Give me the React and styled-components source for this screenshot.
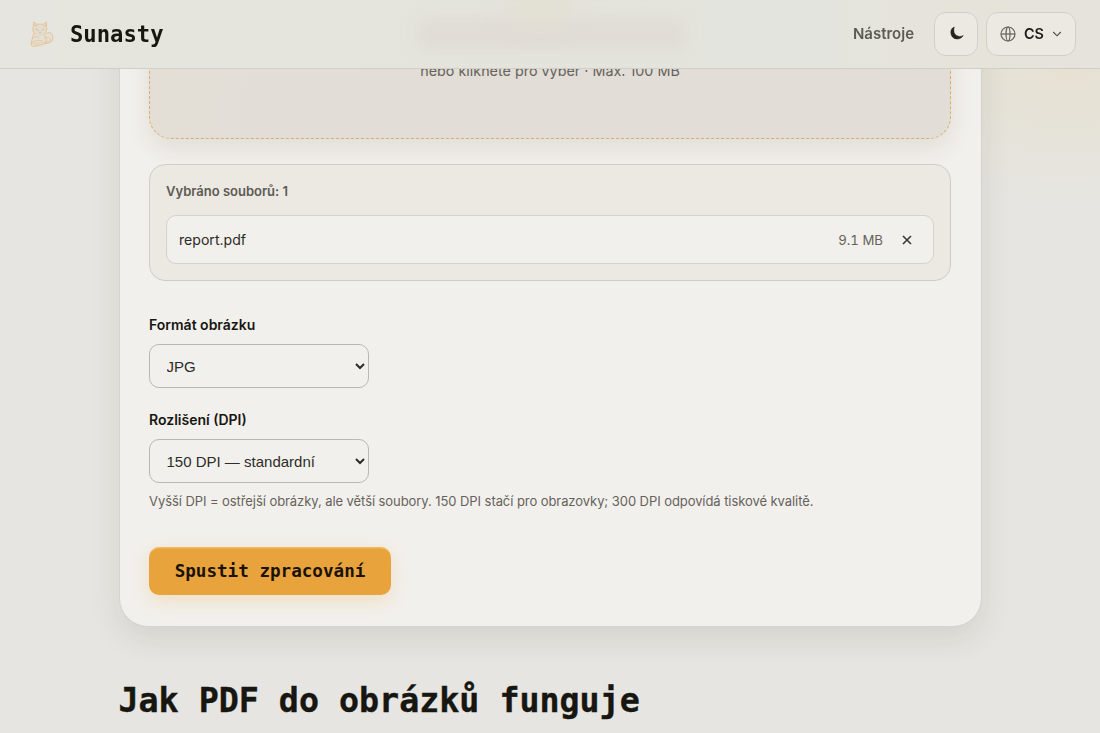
import React from "react";

import styled, { createGlobalStyle } from "styled-components";

const sans = `Inter, "Liberation Sans", sans-serif`;
const mono = `"DejaVu Sans Mono", "Liberation Mono", monospace`;

const GlobalStyle = createGlobalStyle`
  * {
    box-sizing: border-box;
  }

  body {
    margin: 0;
    height: 733px;
    overflow: hidden;
    font-family: ${sans};
    color: #171611;
    background:
      radial-gradient(ellipse 230px 150px at 1070px 60px, rgba(230, 223, 204, 0.75), rgba(230, 223, 204, 0) 100%),
      #e6e5e1;
  }
`;

const Header = styled.header`
  position: fixed;
  z-index: 10;
  top: 0;
  left: 0;
  right: 0;
  display: flex;
  align-items: center;
  height: 69px;
  padding: 0 24px 1px 26px;
  border-bottom: 1px solid #cfcec8;
  background: linear-gradient(90deg, #e6e5e0 0%, #e5e5dd 12%, #e4e4de 75%, #e6e3da 88%, #e5e3dc 100%);

  &::before {
    content: "";
    position: absolute;
    z-index: -1;
    top: 18px;
    left: 418px;
    width: 268px;
    height: 32px;
    background: #e0dcd5;
    filter: blur(8px);
  }

  &::after {
    content: "";
    position: absolute;
    z-index: -1;
    top: -8px;
    left: 505px;
    width: 66px;
    height: 30px;
    background: #e3dfd2;
    filter: blur(11px);
  }
`;

const Brand = styled.a`
  display: flex;
  align-items: center;
  gap: 13px;
  margin-right: auto;
  font-family: ${mono};
  font-size: 22.2px;
  font-weight: 700;
  line-height: 30px;
`;

const NavLink = styled.a`
  margin-right: 20px;
  font-size: 15px;
  font-weight: 600;
  color: #5c5b54;
`;

const HeaderButton = styled.button`
  display: flex;
  align-items: center;
  justify-content: center;
  gap: 8px;
  width: ${({ $width }) => `${$width}px`};
  height: 44px;
  margin-left: ${({ $gap = 0 }) => `${$gap}px`};
  padding: 0;
  border: 1px solid #d1cfca;
  border-radius: 12px;
  font-family: ${sans};
  font-size: 14.4px;
  font-weight: 600;
  color: #1c1b17;
  background: #ece9e3;
`;

const Main = styled.main`
  width: 863px;
  margin: 0 auto;
`;

const Card = styled.section`
  height: 667px;
  margin-top: -40px;
  padding: 30px 29.5px;
  border: 1px solid #d5d3cd;
  border-radius: 29px;
  background: #f2f0ec;
  box-shadow: 0 12px 30px rgba(50, 45, 30, 0.1);
`;

const DropZone = styled.div`
  display: flex;
  align-items: flex-end;
  justify-content: center;
  height: 148px;
  padding-bottom: 57px;
  border: 1.5px dashed #dcae62;
  border-radius: 22px;
  font-size: 14.35px;
  line-height: 20px;
  color: #65625b;
  background: linear-gradient(100deg, #e3dfd5 0%, #e2ddd6 15%, #e2ddd6 100%);
  box-shadow: 0 10px 24px rgba(50, 45, 30, 0.09);
`;

const FilePanel = styled.div`
  height: 117px;
  margin-top: 25px;
  padding: 16px;
  border: 1px solid #cecdc9;
  border-radius: 16px;
  background: #ece9e2;
`;

const PanelTitle = styled.p`
  margin: 0 0 13px;
  font-size: 13px;
  font-weight: 600;
  line-height: 21px;
  color: #5c5a53;
`;

const FileRow = styled.div`
  display: flex;
  align-items: center;
  height: 49px;
  padding: 0 12px;
  border: 1px solid #d3d2cd;
  border-radius: 10px;
  font-size: 14.1px;
  color: #2b2a26;
  background: #f2f0ec;
`;

const FileSize = styled.span`
  margin-left: auto;
  font-size: 13.2px;
  font-variant-numeric: tabular-nums;
  color: #65625b;
`;

const RemoveButton = styled.button`
  display: flex;
  align-items: center;
  justify-content: center;
  width: 28px;
  height: 28px;
  margin-left: 10px;
  padding: 0;
  border: 0;
  color: #3c3a35;
  background: transparent;
`;

const Field = styled.div`
  display: flex;
  flex-direction: column;
  align-items: flex-start;
  margin-top: ${({ $top }) => `${$top}px`};
`;

const Label = styled.label`
  margin-bottom: 8px;
  font-size: 14px;
  font-weight: 600;
  line-height: 22px;
`;

const Select = styled.select`
  width: 220px;
  height: 44px;
  padding: 0 0 0 12.5px;
  border: 1px solid #b9b8b3;
  border-radius: 10px;
  font-family: "Liberation Sans", sans-serif;
  font-size: 15px;
  color: #2d2c28;
  background: #f2f0ec;
`;

const Hint = styled.p`
  margin: 7px 0 0;
  font-size: 13px;
  line-height: 22px;
  letter-spacing: -0.07px;
  white-space: nowrap;
  color: #65625b;
`;

const SubmitButton = styled.button`
  width: 242px;
  height: 48px;
  margin-top: 35px;
  padding: 0;
  border: 0;
  border-radius: 10px;
  font-family: ${mono};
  font-size: 17.6px;
  font-weight: 700;
  color: #1a1206;
  background: #e8a33d;
  box-shadow: 0 6px 18px rgba(232, 163, 61, 0.22), inset 0 1.5px 0 rgba(255, 220, 155, 0.4);
`;

const Heading = styled.h2`
  margin: 52px 0 0;
  font-family: ${mono};
  font-size: 33.3px;
  font-weight: 700;
  line-height: 44px;
  white-space: nowrap;
  -webkit-text-stroke: 0.4px #171611;
`;

const CatLogo = () => (
  <svg width="31" height="32" viewBox="0 0 31 32" fill="none" stroke="#e6c495" strokeWidth="1" strokeLinejoin="round" strokeLinecap="round">
    <path d="M7.5 14C6.4 11.5 6.7 9 7.6 7.5L7.5 4L11 6.5C13 6 15.5 6 17 6.5L20.5 4L20.3 8.5C21.2 11 20.5 14 18 16C15.5 17.6 11.5 17.3 9.5 16Z" fill="#e4ddd0" />
    <path d="M8 15.5C6.5 19 5.5 23 5.2 26C5 28.5 7 29 9 28C13 27.8 18 26 22 25C26 24.5 27.5 21.5 26.6 17.5C25.7 14 22 14 20 15.5M18 17C20 19 21 21.5 20 23.5" fill="#e4ddd0" fillOpacity="0.7" />
    <path d="M7 20C9 18 12 18.5 13 20M6 25C9 22.5 12 22 16 22.5M18 20C22 18.5 25 20 24.5 22.5C22 25.5 17 23.5 12 25.5C9 27 7 26 8 24" strokeWidth="0.8" />
    <path d="M10 11.2L12 12M18 11L16 12M13 14L14 14.6L15 14M8 7L10.5 8M20 7L17.8 8" stroke="#d6b58a" strokeWidth="0.8" />
  </svg>
);

const Moon = () => (
  <svg width="16" height="16" viewBox="0 0 16 16">
    <path d="M6.3 1C3.4 2 2.6 4.5 2.9 7.2C3.3 10.8 5.9 13 9.2 13C11.9 13 14 11.8 15.2 9.5C13.8 10.3 12.2 10.6 10.5 10.2C7.4 9.5 5.8 7.2 5.8 4.4C5.8 3.1 5.9 2 6.3 1Z" fill="#24221d" stroke="#24221d" strokeWidth="0.5" strokeLinejoin="round" />
  </svg>
);

const Globe = () => (
  <svg width="16" height="16" viewBox="0 0 16 16" fill="none" stroke="#66635b" strokeWidth="1.2">
    <circle cx="8" cy="8" r="7" />
    <ellipse cx="8" cy="8" rx="2" ry="7" />
    <path d="M1 8H15" />
  </svg>
);

const Chevron = () => (
  <svg width="10" height="10" viewBox="0 0 10 10" fill="none" stroke="#4d4a43" strokeWidth="1.1">
    <path d="M1.2 3L5 6.8L8.8 3" />
  </svg>
);

const Cross = () => (
  <svg width="10" height="10" viewBox="0 0 10 10" stroke="currentColor" strokeWidth="1.6">
    <path d="M1 1L9 9M9 1L1 9" />
  </svg>
);

const App = () => {
  return (
    <>
      <GlobalStyle />
      <Header>
        <Brand>
          <CatLogo />
          Sunasty
        </Brand>
        <NavLink>Nástroje</NavLink>
        <HeaderButton $width={44} aria-label="Tmavý režim">
          <Moon />
        </HeaderButton>
        <HeaderButton $width={90} $gap={8}>
          <Globe />
          CS
          <Chevron />
        </HeaderButton>
      </Header>
      <Main>
        <Card>
          <DropZone>nebo klikněte pro výběr · Max. 100 MB</DropZone>
          <FilePanel>
            <PanelTitle>Vybráno souborů: 1</PanelTitle>
            <FileRow>
              report.pdf
              <FileSize>9.1 MB</FileSize>
              <RemoveButton aria-label="Odebrat">
                <Cross />
              </RemoveButton>
            </FileRow>
          </FilePanel>
          <Field $top={33}>
            <Label htmlFor="format">Formát obrázku</Label>
            <Select id="format">
              <option>JPG</option>
            </Select>
          </Field>
          <Field $top={21}>
            <Label htmlFor="dpi">Rozlišení (DPI)</Label>
            <Select id="dpi">
              <option>150 DPI — standardní</option>
            </Select>
            <Hint>
              Vyšší DPI = ostřejší obrázky, ale větší soubory. 150 DPI stačí pro obrazovky; 300 DPI odpovídá tiskové kvalitě.
            </Hint>
          </Field>
          <SubmitButton>Spustit zpracování</SubmitButton>
        </Card>
        <Heading>Jak PDF do obrázků funguje</Heading>
      </Main>
    </>
  );
};

export default App;
